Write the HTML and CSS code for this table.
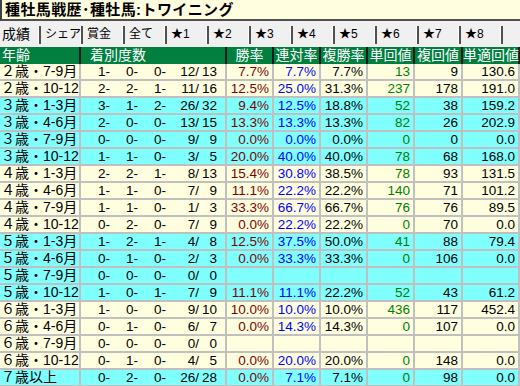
FILE: index.html
```html
<!DOCTYPE html>
<html lang="ja">
<head>
<meta charset="utf-8">
<link rel="stylesheet" href="styles.css">
</head>
<body>
<div class="page">
  <div class="title">種牡馬戦歴･種牡馬:トワイニング</div>
  <div class="tabs">
    <div class="tab sel">成績</div>
    <div class="tab">シェア</div>
    <div class="tab">賞金</div>
    <div class="tab">全て</div>
    <div class="tab">★1</div>
    <div class="tab">★2</div>
    <div class="tab">★3</div>
    <div class="tab">★4</div>
    <div class="tab">★5</div>
    <div class="tab">★6</div>
    <div class="tab">★7</div>
    <div class="tab">★8</div>
  </div>
  <div class="table">
    <div class="row head">
      <div class="c c1">年齢</div>
      <div class="c c2">着別度数</div>
      <div class="c c3">勝率</div>
      <div class="c c4">連対率</div>
      <div class="c c5">複勝率</div>
      <div class="c c6">単回値</div>
      <div class="c c7">複回値</div>
      <div class="c c8">単適回値</div>
    </div>
    <div class="row y"><div class="c c1">２歳・7-9月</div><div class="c c2"><span class="f1">1-</span><span class="f2">0-</span><span class="f3">0-</span><span class="f4">12/</span><span class="f5">13</span></div><div class="c c3">7.7%</div><div class="c c4">7.7%</div><div class="c c5">7.7%</div><div class="c c6">13</div><div class="c c7">9</div><div class="c c8">130.6</div></div>
    <div class="row y"><div class="c c1">２歳・10-12</div><div class="c c2"><span class="f1">2-</span><span class="f2">2-</span><span class="f3">1-</span><span class="f4">11/</span><span class="f5">16</span></div><div class="c c3">12.5%</div><div class="c c4">25.0%</div><div class="c c5">31.3%</div><div class="c c6">237</div><div class="c c7">178</div><div class="c c8">191.0</div></div>
    <div class="row b"><div class="c c1">３歳・1-3月</div><div class="c c2"><span class="f1">3-</span><span class="f2">1-</span><span class="f3">2-</span><span class="f4">26/</span><span class="f5">32</span></div><div class="c c3">9.4%</div><div class="c c4">12.5%</div><div class="c c5">18.8%</div><div class="c c6">52</div><div class="c c7">38</div><div class="c c8">159.2</div></div>
    <div class="row b"><div class="c c1">３歳・4-6月</div><div class="c c2"><span class="f1">2-</span><span class="f2">0-</span><span class="f3">0-</span><span class="f4">13/</span><span class="f5">15</span></div><div class="c c3">13.3%</div><div class="c c4">13.3%</div><div class="c c5">13.3%</div><div class="c c6">82</div><div class="c c7">26</div><div class="c c8">202.9</div></div>
    <div class="row b"><div class="c c1">３歳・7-9月</div><div class="c c2"><span class="f1">0-</span><span class="f2">0-</span><span class="f3">0-</span><span class="f4">9/</span><span class="f5">9</span></div><div class="c c3">0.0%</div><div class="c c4">0.0%</div><div class="c c5">0.0%</div><div class="c c6">0</div><div class="c c7">0</div><div class="c c8">0.0</div></div>
    <div class="row b"><div class="c c1">３歳・10-12</div><div class="c c2"><span class="f1">1-</span><span class="f2">1-</span><span class="f3">0-</span><span class="f4">3/</span><span class="f5">5</span></div><div class="c c3">20.0%</div><div class="c c4">40.0%</div><div class="c c5">40.0%</div><div class="c c6">78</div><div class="c c7">68</div><div class="c c8">168.0</div></div>
    <div class="row y"><div class="c c1">４歳・1-3月</div><div class="c c2"><span class="f1">2-</span><span class="f2">2-</span><span class="f3">1-</span><span class="f4">8/</span><span class="f5">13</span></div><div class="c c3">15.4%</div><div class="c c4">30.8%</div><div class="c c5">38.5%</div><div class="c c6">78</div><div class="c c7">93</div><div class="c c8">131.5</div></div>
    <div class="row y"><div class="c c1">４歳・4-6月</div><div class="c c2"><span class="f1">1-</span><span class="f2">1-</span><span class="f3">0-</span><span class="f4">7/</span><span class="f5">9</span></div><div class="c c3">11.1%</div><div class="c c4">22.2%</div><div class="c c5">22.2%</div><div class="c c6">140</div><div class="c c7">71</div><div class="c c8">101.2</div></div>
    <div class="row y"><div class="c c1">４歳・7-9月</div><div class="c c2"><span class="f1">1-</span><span class="f2">1-</span><span class="f3">0-</span><span class="f4">1/</span><span class="f5">3</span></div><div class="c c3">33.3%</div><div class="c c4">66.7%</div><div class="c c5">66.7%</div><div class="c c6">76</div><div class="c c7">76</div><div class="c c8">89.5</div></div>
    <div class="row y"><div class="c c1">４歳・10-12</div><div class="c c2"><span class="f1">0-</span><span class="f2">2-</span><span class="f3">0-</span><span class="f4">7/</span><span class="f5">9</span></div><div class="c c3">0.0%</div><div class="c c4">22.2%</div><div class="c c5">22.2%</div><div class="c c6">0</div><div class="c c7">70</div><div class="c c8">0.0</div></div>
    <div class="row b"><div class="c c1">５歳・1-3月</div><div class="c c2"><span class="f1">1-</span><span class="f2">2-</span><span class="f3">1-</span><span class="f4">4/</span><span class="f5">8</span></div><div class="c c3">12.5%</div><div class="c c4">37.5%</div><div class="c c5">50.0%</div><div class="c c6">41</div><div class="c c7">88</div><div class="c c8">79.4</div></div>
    <div class="row b"><div class="c c1">５歳・4-6月</div><div class="c c2"><span class="f1">0-</span><span class="f2">1-</span><span class="f3">0-</span><span class="f4">2/</span><span class="f5">3</span></div><div class="c c3">0.0%</div><div class="c c4">33.3%</div><div class="c c5">33.3%</div><div class="c c6">0</div><div class="c c7">106</div><div class="c c8">0.0</div></div>
    <div class="row b"><div class="c c1">５歳・7-9月</div><div class="c c2"><span class="f1">0-</span><span class="f2">0-</span><span class="f3">0-</span><span class="f4">0/</span><span class="f5">0</span></div><div class="c c3"></div><div class="c c4"></div><div class="c c5"></div><div class="c c6"></div><div class="c c7"></div><div class="c c8"></div></div>
    <div class="row b"><div class="c c1">５歳・10-12</div><div class="c c2"><span class="f1">1-</span><span class="f2">0-</span><span class="f3">1-</span><span class="f4">7/</span><span class="f5">9</span></div><div class="c c3">11.1%</div><div class="c c4">11.1%</div><div class="c c5">22.2%</div><div class="c c6">52</div><div class="c c7">43</div><div class="c c8">61.2</div></div>
    <div class="row y"><div class="c c1">６歳・1-3月</div><div class="c c2"><span class="f1">1-</span><span class="f2">0-</span><span class="f3">0-</span><span class="f4">9/</span><span class="f5">10</span></div><div class="c c3">10.0%</div><div class="c c4">10.0%</div><div class="c c5">10.0%</div><div class="c c6">436</div><div class="c c7">117</div><div class="c c8">452.4</div></div>
    <div class="row y"><div class="c c1">６歳・4-6月</div><div class="c c2"><span class="f1">0-</span><span class="f2">1-</span><span class="f3">0-</span><span class="f4">6/</span><span class="f5">7</span></div><div class="c c3">0.0%</div><div class="c c4">14.3%</div><div class="c c5">14.3%</div><div class="c c6">0</div><div class="c c7">107</div><div class="c c8">0.0</div></div>
    <div class="row y"><div class="c c1">６歳・7-9月</div><div class="c c2"><span class="f1">0-</span><span class="f2">0-</span><span class="f3">0-</span><span class="f4">0/</span><span class="f5">0</span></div><div class="c c3"></div><div class="c c4"></div><div class="c c5"></div><div class="c c6"></div><div class="c c7"></div><div class="c c8"></div></div>
    <div class="row y"><div class="c c1">６歳・10-12</div><div class="c c2"><span class="f1">0-</span><span class="f2">1-</span><span class="f3">0-</span><span class="f4">4/</span><span class="f5">5</span></div><div class="c c3">0.0%</div><div class="c c4">20.0%</div><div class="c c5">20.0%</div><div class="c c6">0</div><div class="c c7">148</div><div class="c c8">0.0</div></div>
    <div class="row b"><div class="c c1">７歳以上</div><div class="c c2"><span class="f1">0-</span><span class="f2">2-</span><span class="f3">0-</span><span class="f4">26/</span><span class="f5">28</span></div><div class="c c3">0.0%</div><div class="c c4">7.1%</div><div class="c c5">7.1%</div><div class="c c6">0</div><div class="c c7">98</div><div class="c c8">0.0</div></div>
  </div>
</div>
</body>
</html>
```

FILE: styles.css
```css
html, body {
  margin: 0;
  padding: 0;
  background: #f0f0f0;
}
.page {
  width: 520px;
  height: 386px;
  overflow: hidden;
  font-family: "Liberation Sans", "Noto Sans CJK JP", sans-serif;
  font-size: 14px;
  color: #000;
}
.title {
  box-sizing: border-box;
  height: 21px;
  background: #ffffe0;
  border-left: 2px solid #404040;
  border-bottom: 2px solid #505050;
  padding-left: 3px;
  font-size: 15px;
  font-weight: bold;
  letter-spacing: 0.4px;
  line-height: 19px;
  white-space: nowrap;
}
.tabs {
  display: flex;
  padding-top: 5px;
  height: 18px;
  margin-bottom: 3px;
}
.tab {
  box-sizing: border-box;
  flex: 0 0 42px;
  height: 18px;
  border-right: 2px solid #505050;
  box-shadow: inset -1px 0 0 #ffffff;
  padding-left: 4px;
  font-size: 12px;
  line-height: 17px;
  white-space: nowrap;
}
.tab:nth-child(1), .tab:nth-child(2) {
  flex-basis: 41px;
}
.tab.sel {
  font-size: 14px;
  padding-left: 2px;
  line-height: 16px;
}
.table {
  display: flex;
  flex-direction: column;
}
.row {
  display: flex;
  box-sizing: border-box;
  height: 17px;
  border-bottom: 2px solid #c0c0c0;
}
.row.y { background: #ffffe0; }
.row.b { background: #80ffff; }
.row.head {
  background: #007f3f;
  border-bottom: none;
  color: #ffffff;
}
.c {
  box-sizing: border-box;
  height: 15px;
  line-height: 15px;
  font-size: 13.5px;
  border-left: 2px solid #c0c0c0;
  padding-right: 3px;
  text-align: right;
  white-space: nowrap;
}
.head .c {
  height: 17px;
  line-height: 17px;
  font-size: 14px;
  border-left-color: #1a1a1a;
  text-align: center;
  padding-right: 0;
}
.c1 { width: 79px; text-align: left; padding-left: 1px; }
.row .c1 { border-left: none; font-size: 14px; }
.head .c1 { text-align: left; padding-left: 2px; }
.c2 { width: 146px; display: flex; padding-right: 0; }
.head .c2 { text-align: left; padding-left: 9px; display: block; }
.c3 { width: 47px; color: #800000; }
.c4 { width: 47px; color: #0000ff; }
.c5 { width: 47px; }
.c6 { width: 47px; color: #008000; }
.c7 { width: 48px; }
.c8 { width: 59px; border-right: 2px solid #c0c0c0; }
.head .c8 { border-right-color: #1a1a1a; }
.head .c { color: #ffffff; }
.f1, .f2, .f3, .f4, .f5 { display: block; text-align: right; }
.f1 { width: 29px; }
.f2 { width: 28px; }
.f3 { width: 28px; }
.f4 { width: 33px; }
.f5 { width: 18px; }
```
